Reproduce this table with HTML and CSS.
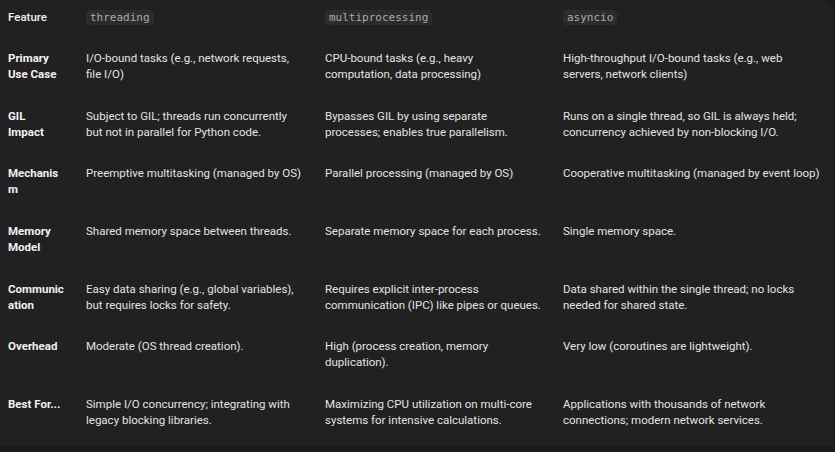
FILE: index.html
```html
<!DOCTYPE html>
<html>
<head>
<meta charset="utf-8">
<link rel="stylesheet" href="styles.css">
</head>
<body>
<div class="panel">
  <div class="grid">
    <div class="cell head label-h">Feature</div>
    <div class="cell head"><code>threading</code></div>
    <div class="cell head"><code>multiprocessing</code></div>
    <div class="cell head last"><code>asyncio</code></div>

    <div class="cell label">Primary Use Case</div>
    <div class="cell">I/O-bound tasks (e.g., network requests, file I/O)</div>
    <div class="cell">CPU-bound tasks (e.g., heavy computation, data processing)</div>
    <div class="cell last">High-throughput I/O-bound tasks (e.g., web servers, network clients)</div>

    <div class="cell label">GIL Impact</div>
    <div class="cell">Subject to GIL; threads run concurrently but not in parallel for Python code.</div>
    <div class="cell">Bypasses GIL by using separate processes; enables true parallelism.</div>
    <div class="cell last">Runs on a single thread, so GIL is always held; concurrency achieved by non-blocking I/O.</div>

    <div class="cell label">Mechanism</div>
    <div class="cell">Preemptive multitasking (managed by OS)</div>
    <div class="cell">Parallel processing (managed by OS)</div>
    <div class="cell last">Cooperative multitasking (managed by event loop)</div>

    <div class="cell label">Memory Model</div>
    <div class="cell">Shared memory space between threads.</div>
    <div class="cell">Separate memory space for each process.</div>
    <div class="cell last">Single memory space.</div>

    <div class="cell label">Communication</div>
    <div class="cell">Easy data sharing (e.g., global variables), but requires locks for safety.</div>
    <div class="cell">Requires explicit inter-process communication (IPC) like pipes or queues.</div>
    <div class="cell last">Data shared within the single thread; no locks needed for shared state.</div>

    <div class="cell label">Overhead</div>
    <div class="cell">Moderate (OS thread creation).</div>
    <div class="cell">High (process creation, memory duplication).</div>
    <div class="cell last">Very low (coroutines are lightweight).</div>

    <div class="cell label">Best For...</div>
    <div class="cell">Simple I/O concurrency; integrating with legacy blocking libraries.</div>
    <div class="cell">Maximizing CPU utilization on multi-core systems for intensive calculations.</div>
    <div class="cell last">Applications with thousands of network connections; modern network services.</div>
  </div>
</div>
</body>
</html>
```

FILE: styles.css
```css
html, body {
  margin: 0;
  padding: 0;
  background: #1b1b1b;
}
body {
  width: 835px;
  height: 452px;
  overflow: hidden;
  font-family: Roboto, "Noto Sans", sans-serif;
  font-size: 11.5px;
  line-height: 16px;
  color: #e3e3e3;
}
.panel {
  width: 833px;
  height: 446px;
  background: #212121;
  border-radius: 0 12px 0 0;
}
.grid {
  display: grid;
  grid-template-columns: 78px 239px 238px 1fr;
}
.cell {
  padding: 12.85px 14px 12.85px 8px;
  overflow-wrap: anywhere;
}
.cell.last {
  padding-right: 10px;
}
.head {
  padding-top: 9px;
  padding-bottom: 11px;
}
.label-h {
  font-weight: 500;
  color: #f1f1f1;
}
.label {
  font-weight: 700;
  color: #f1f1f1;
}
code {
  font-family: "DejaVu Sans Mono", monospace;
  font-size: 11px;
  color: #a8abb0;
  background: #2c2c2c;
  border-radius: 4px;
  padding: 1px 4px;
}
```
